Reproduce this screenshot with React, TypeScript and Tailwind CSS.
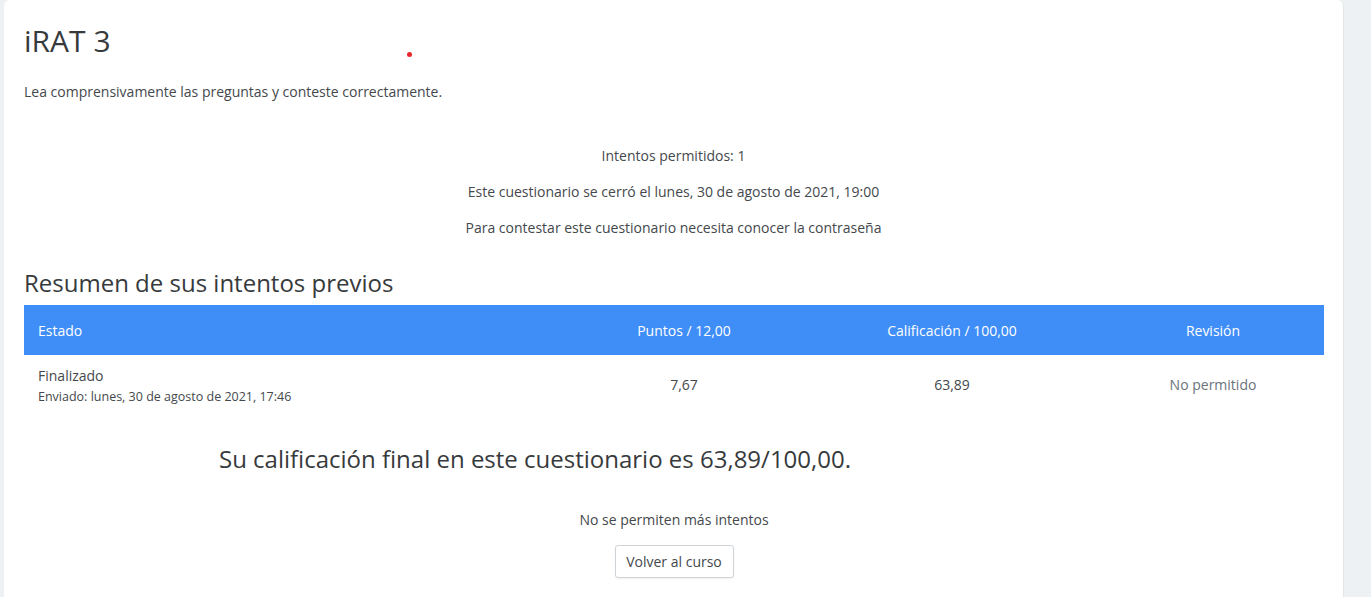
export default function App() {
  return (
    <div className="min-h-[597px] bg-[#eef1f3] pl-[4px] pr-[27px] font-['Open_Sans',sans-serif] text-[#44484c]">
      <div className="relative min-h-[597px] rounded-tl-[6px] rounded-tr-[6px] border-r border-[#e3e6e8] bg-white px-[20px] pt-[21px]">
        <span className="absolute left-[403px] top-[52px] h-[5px] w-[5px] rounded-full bg-[#e8262b]" />
        <h1 className="text-[30px] leading-[40px] text-[#373a3c]">iRAT 3</h1>
        <p className="mt-[21px] text-[14px] leading-[20px]">Lea comprensivamente las preguntas y conteste correctamente.</p>

        <div className="mt-[43px] flex flex-col items-center gap-[15px] text-[14px] leading-[21px]">
          <p>Intentos permitidos: 1</p>
          <p>Este cuestionario se cerró el lunes, 30 de agosto de 2021, 19:00</p>
          <p>Para contestar este cuestionario necesita conocer la contraseña</p>
        </div>

        <h2 className="mt-[29px] text-[24px] leading-[32px] text-[#373a3c]">Resumen de sus intentos previos</h2>

        <div className="mt-[6px] w-[1300px] text-[14px]">
          <div className="grid h-[50px] grid-cols-[542px_236px_300px_222px] items-center bg-[#3f8ef7] text-white">
            <div className="pl-[14px]">Estado</div>
            <div className="text-center">Puntos / 12,00</div>
            <div className="text-center">Calificación / 100,00</div>
            <div className="text-center">Revisión</div>
          </div>
          <div className="grid grid-cols-[542px_236px_300px_222px] items-center py-[10px]">
            <div className="pl-[14px]">
              <div className="leading-[22px]">Finalizado</div>
              <div className="text-[12.5px] leading-[20px]">Enviado: lunes, 30 de agosto de 2021, 17:46</div>
            </div>
            <div className="pb-[4px] text-center">7,67</div>
            <div className="pb-[4px] text-center">63,89</div>
            <div className="pb-[4px] text-center text-[#6a737b]">No permitido</div>
          </div>
        </div>

        <h3 className="mt-[26px] pl-[195px] text-[24px] leading-[32px] text-[#373a3c]">Su calificación final en este cuestionario es 63,89/100,00.</h3>

        <div className="mt-[34px] flex w-[1300px] flex-col items-center text-[14px]">
          <p className="leading-[21px]">No se permiten más intentos</p>
          <button className="mt-[15px] h-[33px] w-[119px] rounded-[3px] border border-[#cfd4d9] bg-white text-[14px] text-[#44484c] shadow-[0_1px_2px_rgba(0,0,0,0.06)]">
            Volver al curso
          </button>
        </div>
      </div>
    </div>
  );
}
